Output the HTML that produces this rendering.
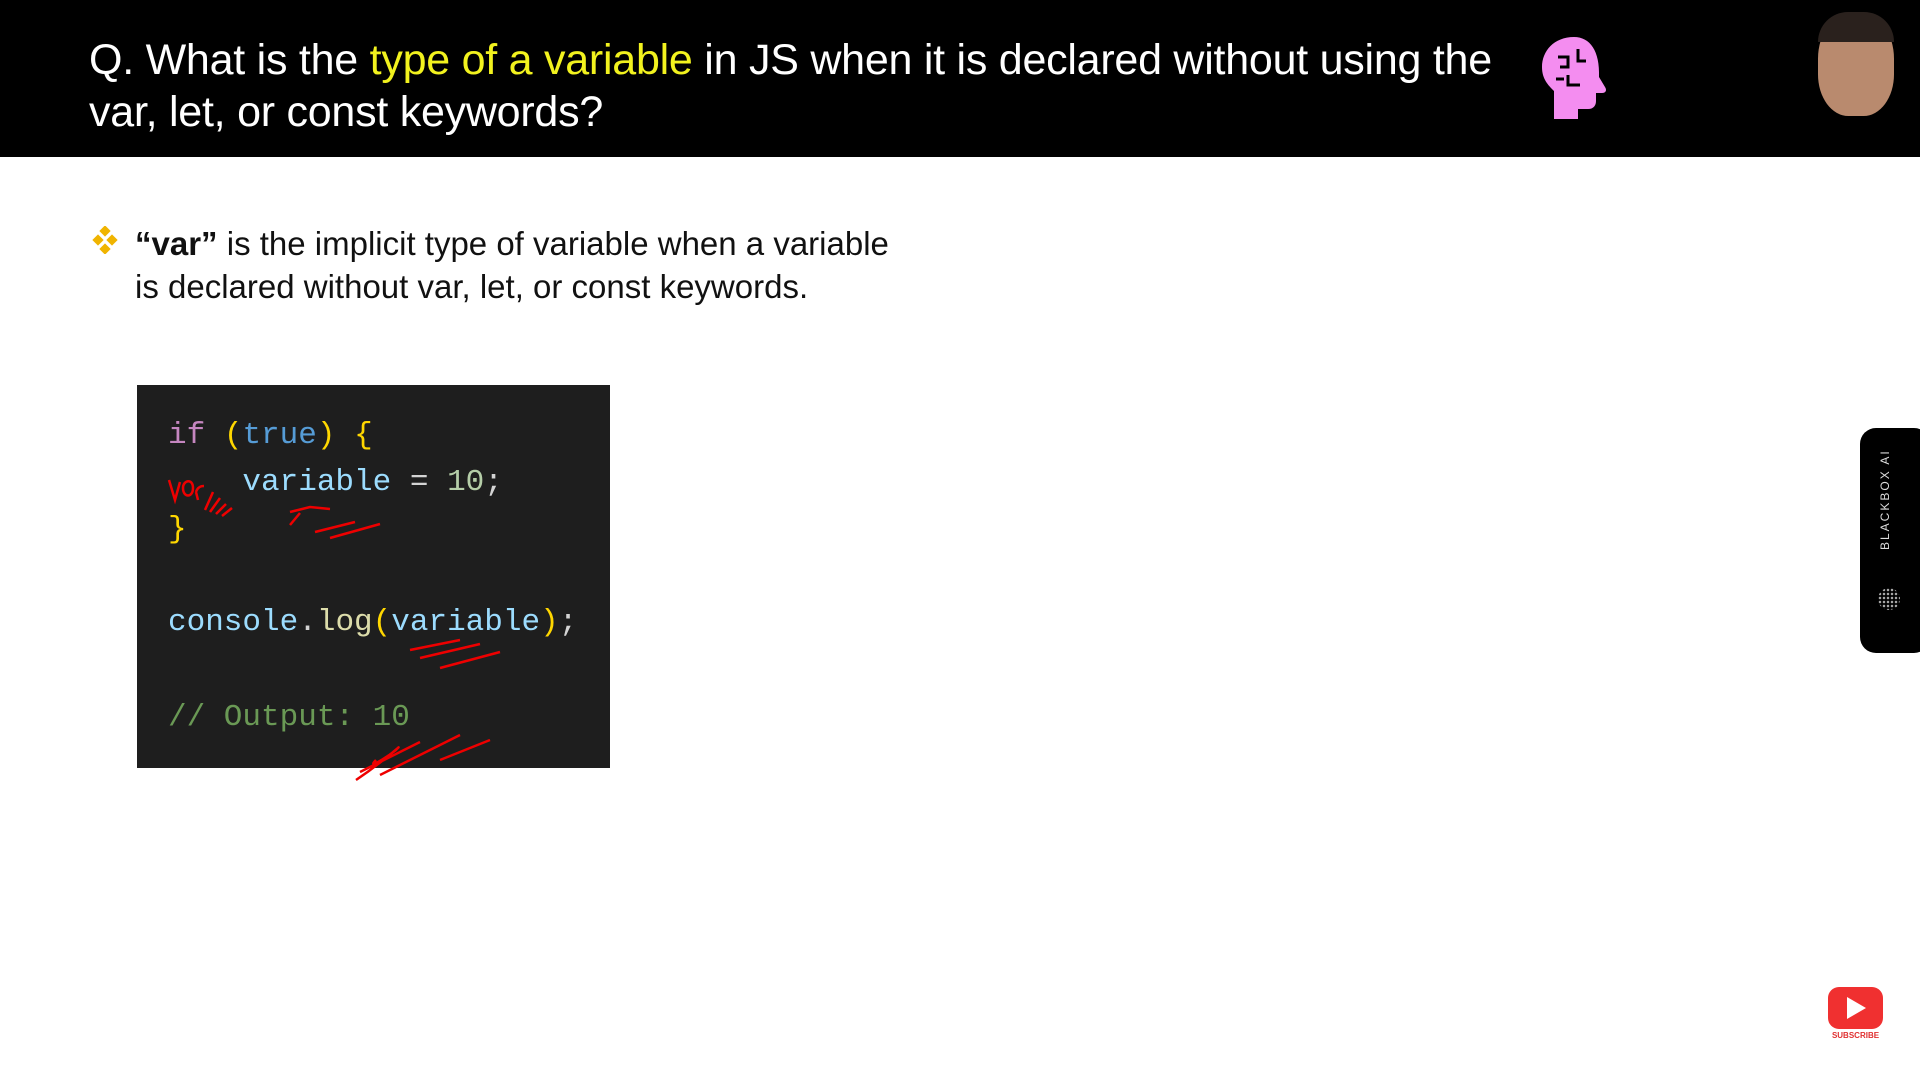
<!DOCTYPE html>
<html><head><meta charset="utf-8"><style>
body{margin:0;width:1920px;height:1080px;background:#fff;position:relative;overflow:hidden;font-family:"Liberation Sans",sans-serif}
.hdr{position:absolute;left:0;top:0;width:1920px;height:157px;background:#000}
.t{position:absolute;left:89px;top:34px;color:#fff;font-size:43px;line-height:52px;letter-spacing:-0.25px;white-space:nowrap}
.y{color:#f2f21e}
.b{position:absolute;left:135px;top:222px;font-size:33px;line-height:43px;color:#111;letter-spacing:0px;white-space:nowrap}
.code{position:absolute;left:137px;top:385px;width:473px;height:383px;background:#1e1e1e}
.c{position:absolute;left:168px;font-family:"Liberation Mono",monospace;font-size:31px;white-space:pre;line-height:40px}
</style></head><body>
<div class="hdr"></div>
<div class="t">Q. What is the <span class="y">type of a variable</span> in JS when it is declared without using the<br>var, let, or const keywords?</div>
<svg style="position:absolute;left:1538px;top:35px" width="76" height="86" viewBox="0 0 76 86"><path d="M36 2C16 2 4 16 4 32c0 12 6 18 12 24v28h24V74h10c6 0 8-4 8-8v-8h6c4 0 5-3 3-6l-6-10C62 16 52 2 36 2z" fill="#f48df0"/><path d="M20 22h10v10h-8M40 14v12h8M30 40v10h12M18 44h8" stroke="#000" stroke-width="3" fill="none"/></svg>
<div style="position:absolute;left:1818px;top:12px;width:76px;height:104px;border-radius:45% 45% 40% 40%;background:#b98a6e"></div>
<div style="position:absolute;left:1818px;top:12px;width:76px;height:30px;border-radius:40px 40px 0 0;background:#2a211d"></div>
<svg style="position:absolute;left:92px;top:226px" width="26" height="28"><g fill="#f0b400"><rect x="9" y="1" width="8" height="8" transform="rotate(45 13 5)"/><rect x="2" y="10" width="8" height="8" transform="rotate(45 6 14)"/><rect x="16" y="10" width="8" height="8" transform="rotate(45 20 14)"/><rect x="9" y="19" width="8" height="8" transform="rotate(45 13 23)"/></g></svg>
<div class="b"><b>“var”</b> is the implicit type of variable when a variable<br>is declared without var, let, or const keywords.</div>
<div class="code"></div>
<div class="c" style="top:416px"><span style="color:#c586c0">if</span> <span style="color:#ffd700">(</span><span style="color:#569cd6">true</span><span style="color:#ffd700">)</span> <span style="color:#ffd700">{</span></div>
<div class="c" style="top:463px">    <span style="color:#9cdcfe">variable</span><span style="color:#d4d4d4"> = </span><span style="color:#b5cea8">10</span><span style="color:#d4d4d4">;</span></div>
<div class="c" style="top:510px;color:#ffd700">}</div>
<div class="c" style="top:603px"><span style="color:#9cdcfe">console</span><span style="color:#d4d4d4">.</span><span style="color:#dcdcaa">log</span><span style="color:#ffd700">(</span><span style="color:#9cdcfe">variable</span><span style="color:#ffd700">)</span><span style="color:#d4d4d4">;</span></div>
<div class="c" style="top:698px;color:#6a9955">// Output: 10</div>
<svg style="position:absolute;left:0;top:0" width="1920" height="1080" fill="none" stroke="#e00" stroke-width="2.5"><path d="M169 480l6 20 5-18M183 488c0 10 10 10 10 0s-10-8-10 0M196 492l2 8M196 492c2-6 6-6 8-6"/><path d="M205 510l8-18M210 512l10-14M216 514l10-10M222 516l10-8"/><path d="M290 525l10-12M290 512l20-5 20 2M315 532l40-10M330 538l50-14"/><path d="M410 650l50-10M420 658l60-14M440 668l60-16"/><path d="M356 780c30-20 50-40 40-30-10 8-30 20-20 10M360 772l60-30M380 775l80-40M440 760l50-20"/></svg>
<div style="position:absolute;left:1860px;top:428px;width:70px;height:225px;background:#000;border-radius:16px"></div>
<div style="position:absolute;left:1878px;top:550px;color:#ddd;font-size:12px;letter-spacing:2px;transform:rotate(-90deg);transform-origin:0 0;white-space:nowrap">BLACKBOX AI</div>
<div style="position:absolute;left:1878px;top:588px;width:22px;height:22px;background:radial-gradient(circle,#aaa 1px,transparent 1.5px) 0 0/4px 4px;border-radius:50%"></div>
<div style="position:absolute;left:1828px;top:987px;width:55px;height:42px;background:#f03030;border-radius:11px"></div>
<svg style="position:absolute;left:1844px;top:996px" width="24" height="24"><path d="M3 1l19 11-19 11z" fill="#fff"/></svg>
<div style="position:absolute;left:1828px;top:1031px;width:55px;text-align:center;color:#e03030;font-size:8px;font-weight:bold">SUBSCRIBE</div>
</body></html>
